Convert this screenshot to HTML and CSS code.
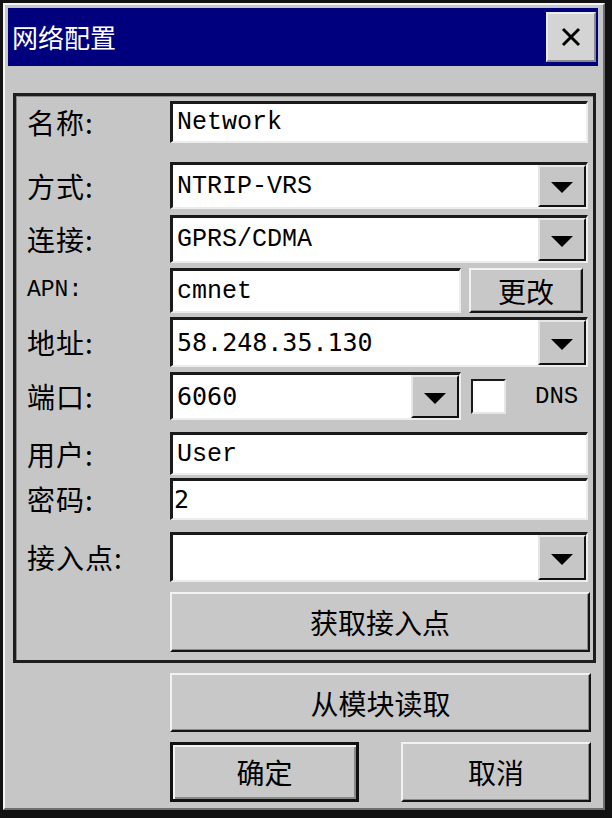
FILE: index.html
```html
<!DOCTYPE html>
<html lang="zh-CN">
<head>
  <meta charset="UTF-8">
  <meta name="viewport" content="width=device-width, initial-scale=1.0">
  <title>网络配置</title>
  <link rel="stylesheet" href="styles.css">
</head>
<body>

  <div class="window">
    <div class="titlebar">
      <span class="title">网络配置</span>
      <button class="close-btn" aria-label="关闭">
        <svg width="22" height="22" viewBox="0 0 22 22">
          <path d="M3 3 L19 19 M19 3 L3 19" stroke="#000" stroke-width="3" fill="none"/>
        </svg>
      </button>
    </div>

    <div class="client">
      <div class="group">
        <div class="row row-name">
          <span class="label">名称:</span>
          <div class="field"><span class="mono">Network</span></div>
        </div>

        <div class="row row-mode">
          <span class="label">方式:</span>
          <div class="field combo"><span class="mono">NTRIP-VRS</span><span class="drop"></span></div>
        </div>

        <div class="row row-link">
          <span class="label">连接:</span>
          <div class="field combo"><span class="mono">GPRS/CDMA</span><span class="drop"></span></div>
        </div>

        <div class="row row-apn">
          <span class="label mono-label">APN:</span>
          <div class="field field-short"><span class="mono">cmnet</span></div>
          <button class="btn btn-change">更改</button>
        </div>

        <div class="row row-addr">
          <span class="label">地址:</span>
          <div class="field combo"><span class="digits">58.248.35.130</span><span class="drop"></span></div>
        </div>

        <div class="row row-port">
          <span class="label">端口:</span>
          <div class="field combo field-short"><span class="digits">6060</span><span class="drop"></span></div>
          <span class="checkbox"></span>
          <span class="dns">DNS</span>
        </div>

        <div class="row row-user">
          <span class="label">用户:</span>
          <div class="field"><span class="mono">User</span></div>
        </div>

        <div class="row row-pass">
          <span class="label">密码:</span>
          <div class="field field-tight"><span class="digits">2</span></div>
        </div>

        <div class="row row-ap">
          <span class="label">接入点:</span>
          <div class="field combo"><span class="mono"></span><span class="drop"></span></div>
        </div>

        <div class="row row-fetch">
          <span class="label"></span>
          <button class="btn btn-fetch">获取接入点</button>
        </div>
      </div>

      <div class="actions">
        <button class="btn btn-read">从模块读取</button>
        <div class="btn-row">
          <button class="btn btn-default btn-ok">确定</button>
          <button class="btn btn-cancel">取消</button>
        </div>
      </div>
    </div>
  </div>

</body>
</html>
```

FILE: styles.css
```css
body {
  margin: 0;
  background-color: #121212;
  font-family: "Noto Sans CJK SC", sans-serif;
  color: #000;
}
.window {
  box-sizing: border-box;
  width: 602px;
  height: 807px;
  margin: 3px 0 0 3px;
  padding: 3px 5px 0 3px;
  background-color: #c6c6c6;
  border-top: 2px solid #f4f4f4;
  border-left: 2px solid #f4f4f4;
  border-right: 2px solid #6e6e6e;
  border-bottom: 2px solid #6e6e6e;
}
.titlebar {
  height: 58px;
  display: flex;
  align-items: center;
  justify-content: space-between;
  padding: 0 2px 0 4px;
  background-color: #00007e;
}
.title {
  color: #fff;
  font-size: 26px;
  line-height: 1;
  letter-spacing: 0;
}
.close-btn {
  box-sizing: border-box;
  width: 50px;
  height: 50px;
  padding: 0;
  display: flex;
  align-items: center;
  justify-content: center;
  background-color: #d4d4d4;
  border: 2px solid;
  border-color: #ececec #8a8a8a #8a8a8a #ececec;
}
.group {
  margin: 27px 2px 0 5px;
  padding: 0 5px 8px 0;
  border: 3px solid #1e1e1e;
  box-shadow: inset 1px 1px #8a8a8a;
}
.row {
  display: flex;
  align-items: center;
}
.label {
  box-sizing: border-box;
  width: 154px;
  padding-left: 11px;
  font-size: 28px;
  line-height: 1;
  letter-spacing: 1px;
}
.mono-label {
  font-family: "Liberation Mono", monospace;
  font-size: 23px;
  letter-spacing: 0;
}
.field {
  box-sizing: border-box;
  flex: 1;
  height: 100%;
  display: flex;
  align-items: center;
  padding-left: 4px;
  background-color: #fff;
  border-style: solid;
  border-width: 3px 2px 2px 3px;
  border-color: #1a1a1a #ededed #ededed #1a1a1a;
}
.field-short {
  flex: none;
  width: 291px;
}
.field-tight {
  padding-left: 1px;
}
.combo {
  padding-right: 0;
}
.mono {
  font-family: "Liberation Mono", monospace;
  font-size: 25px;
}
.digits {
  font-family: "DejaVu Sans Mono", monospace;
  font-size: 25px;
}
.drop {
  box-sizing: border-box;
  width: 48px;
  align-self: stretch;
  margin-left: auto;
  display: flex;
  align-items: center;
  justify-content: center;
  background-color: #c6c6c6;
  border: 2px solid;
  border-color: #e6e6e6 #111 #111 #e6e6e6;
}
.drop::after {
  content: "";
  width: 0;
  height: 0;
  border-left: 11px solid transparent;
  border-right: 11px solid transparent;
  border-top: 11px solid #000;
  margin-top: 3px;
}
.checkbox {
  box-sizing: border-box;
  width: 35px;
  height: 35px;
  margin-left: 10px;
  background-color: #fff;
  border: 2px solid;
  border-color: #1a1a1a #e6e6e6 #e6e6e6 #1a1a1a;
}
.dns {
  margin-left: 29px;
  font-family: "Liberation Mono", monospace;
  font-size: 24px;
}
.btn {
  box-sizing: border-box;
  padding: 0;
  font-family: "Noto Sans CJK SC", sans-serif;
  font-size: 28px;
  line-height: 1;
  color: #000;
  background-color: #c8c8c8;
  border: 2px solid;
  border-color: #f2f2f2 #141414 #141414 #f2f2f2;
  box-shadow: inset -1px -1px #8a8a8a;
}
.btn-default {
  border: 3px solid #111;
  box-shadow: inset 2px 2px #f2f2f2, inset -2px -2px #8a8a8a;
}

/* row heights and gaps, measured top to top */
.row-name { height: 42px; margin-top: 5px; }
.row-mode { height: 47px; margin-top: 19px; }
.row-link { height: 48px; margin-top: 6px; }
.row-apn { height: 45px; margin-top: 5px; }
.row-addr { height: 50px; margin-top: 4px; }
.row-port { height: 48px; margin-top: 5px; }
.row-user { height: 43px; margin-top: 12px; }
.row-pass { height: 42px; margin-top: 3px; }
.row-ap { height: 50px; margin-top: 12px; }
.row-fetch { height: 60px; margin-top: 10px; }

.btn-change {
  width: 114px;
  height: 100%;
  margin-left: 8px;
  margin-right: 5px;
}
.btn-fetch {
  flex: 1;
  height: 100%;
  margin-right: -2px;
}
.actions {
  width: 421px;
  margin-left: 162px;
}
.btn-read {
  width: 100%;
  height: 59px;
  margin-top: 10px;
}
.btn-row {
  display: flex;
  gap: 42px;
  margin-top: 10px;
}
.btn-ok {
  width: 189px;
  height: 60px;
}
.btn-cancel {
  width: 190px;
  height: 60px;
}
```
